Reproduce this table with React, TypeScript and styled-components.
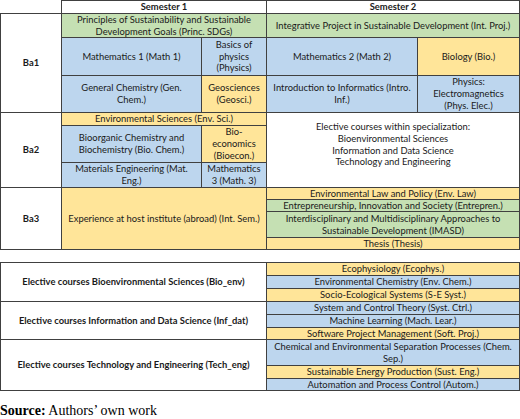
import React from "react";
import styled, { createGlobalStyle } from "styled-components";

const Global = createGlobalStyle`
  html, body { margin: 0; padding: 0; background: #fff; }
  body { font-family: Lato, "Open Sans", sans-serif; color: #000; }
`;

type Tone = "green" | "blue" | "yellow" | "white";
const toneColor: Record<Tone, string> = {
  green: "#c5e0b3",
  blue: "#bdd6ee",
  yellow: "#ffe599",
  white: "#ffffff",
};

const Page = styled.div`
  width: 520px;
  display: flex;
  flex-direction: column;
`;

const PlanGrid = styled.div`
  display: grid;
  grid-template-columns: 61px 140px 65px 151px 102px;
  grid-template-rows: 13px 24px 38px 37px 13px 37px 25px 12px 12px 26px 12px 1px;
`;

const ElectiveGrid = styled.div`
  margin-top: 12px;
  display: grid;
  grid-template-columns: 266px 253px;
  grid-template-rows: 13px 13px 13px 13px 13px 12px 26px 13px 12px 1px;
`;

const Cell = styled.div<{ $tone?: Tone; $col: string; $row: string; $bold?: boolean; $padBottom?: number }>`
  grid-column: ${(p) => p.$col};
  grid-row: ${(p) => p.$row};
  margin: 0 -1px -1px 0;
  border: 1px solid #404040;
  background: ${(p) => toneColor[p.$tone ?? "white"]};
  display: flex;
  align-items: center;
  justify-content: center;
  text-align: center;
  box-sizing: border-box;
  padding: 0 3px ${(p) => p.$padBottom ?? 0}px;
  font-size: 9.4px;
  line-height: 11.7px;
  color: #1a1a1a;
  font-weight: ${(p) => (p.$bold ? 700 : 400)};
  white-space: nowrap;
`;

const Source = styled.p`
  margin: 12px 0 0;
  font-family: "Liberation Serif", "Times New Roman", serif;
  font-size: 14px;
  line-height: 16px;
  color: #000;
`;

const Strong = styled.b`
  font-weight: 700;
`;

export default function App() {
  return (
    <Page>
      <Global />
      <PlanGrid>
        <Cell $col="2 / 4" $row="1 / 2" $bold>Semester 1</Cell>
        <Cell $col="4 / 6" $row="1 / 2" $bold>Semester 2</Cell>

        <Cell $col="1 / 2" $row="2 / 5" $bold>Ba1</Cell>
        <Cell $col="2 / 4" $row="2 / 3" $tone="green">
          Principles of Sustainability and Sustainable<br />Development Goals (Princ. SDGs)
        </Cell>
        <Cell $col="4 / 6" $row="2 / 3" $tone="green">
          Integrative Project in Sustainable Development (Int. Proj.)
        </Cell>
        <Cell $col="2 / 3" $row="3 / 4" $tone="blue">Mathematics 1 (Math 1)</Cell>
        <Cell $col="3 / 4" $row="3 / 4" $tone="blue">
          Basics of<br />physics<br />(Physics)
        </Cell>
        <Cell $col="4 / 5" $row="3 / 4" $tone="blue">Mathematics 2 (Math 2)</Cell>
        <Cell $col="5 / 6" $row="3 / 4" $tone="yellow">Biology (Bio.)</Cell>
        <Cell $col="2 / 3" $row="4 / 5" $tone="blue">
          General Chemistry (Gen.<br />Chem.)
        </Cell>
        <Cell $col="3 / 4" $row="4 / 5" $tone="yellow">
          Geosciences<br />(Geosci.)
        </Cell>
        <Cell $col="4 / 5" $row="4 / 5" $tone="blue">
          Introduction to Informatics (Intro.<br />Inf.)
        </Cell>
        <Cell $col="5 / 6" $row="4 / 5" $tone="blue">
          Physics:<br />Electromagnetics<br />(Phys. Elec.)
        </Cell>

        <Cell $col="1 / 2" $row="5 / 8" $bold>Ba2</Cell>
        <Cell $col="2 / 4" $row="5 / 6" $tone="yellow">Environmental Sciences (Env. Sci.)</Cell>
        <Cell $col="2 / 3" $row="6 / 7" $tone="blue">
          Bioorganic Chemistry and<br />Biochemistry (Bio. Chem.)
        </Cell>
        <Cell $col="3 / 4" $row="6 / 7" $tone="yellow">
          Bio-<br />economics<br />(Bioecon.)
        </Cell>
        <Cell $col="2 / 3" $row="7 / 8" $tone="blue">
          Materials Engineering (Mat.<br />Eng.)
        </Cell>
        <Cell $col="3 / 4" $row="7 / 8" $tone="blue">
          Mathematics<br />3 (Math. 3)
        </Cell>
        <Cell $col="4 / 6" $row="5 / 8" $padBottom={11}>
          Elective courses within specialization:<br />
          Bioenvironmental Sciences<br />
          Information and Data Science<br />
          Technology and Engineering
        </Cell>

        <Cell $col="1 / 2" $row="8 / 12" $bold>Ba3</Cell>
        <Cell $col="2 / 4" $row="8 / 12" $tone="yellow">
          Experience at host institute (abroad) (Int. Sem.)
        </Cell>
        <Cell $col="4 / 6" $row="8 / 9" $tone="yellow">Environmental Law and Policy (Env. Law)</Cell>
        <Cell $col="4 / 6" $row="9 / 10" $tone="green">
          Entrepreneurship, Innovation and Society (Entrepren.)
        </Cell>
        <Cell $col="4 / 6" $row="10 / 11" $tone="green">
          Interdisciplinary and Multidisciplinary Approaches to<br />Sustainable Development (IMASD)
        </Cell>
        <Cell $col="4 / 6" $row="11 / 12" $tone="yellow">Thesis (Thesis)</Cell>
      </PlanGrid>

      <ElectiveGrid>
        <Cell $col="1 / 2" $row="1 / 4" $bold>Elective courses Bioenvironmental Sciences (Bio_env)</Cell>
        <Cell $col="2 / 3" $row="1 / 2" $tone="yellow">Ecophysiology (Ecophys.)</Cell>
        <Cell $col="2 / 3" $row="2 / 3" $tone="blue">Environmental Chemistry (Env. Chem.)</Cell>
        <Cell $col="2 / 3" $row="3 / 4" $tone="yellow">Socio-Ecological Systems (S-E Syst.)</Cell>

        <Cell $col="1 / 2" $row="4 / 7" $bold>Elective courses Information and Data Science (Inf_dat)</Cell>
        <Cell $col="2 / 3" $row="4 / 5" $tone="blue">System and Control Theory (Syst. Ctrl.)</Cell>
        <Cell $col="2 / 3" $row="5 / 6" $tone="blue">Machine Learning (Mach. Lear.)</Cell>
        <Cell $col="2 / 3" $row="6 / 7" $tone="yellow">Software Project Management (Soft. Proj.)</Cell>

        <Cell $col="1 / 2" $row="7 / 10" $bold>Elective courses Technology and Engineering (Tech_eng)</Cell>
        <Cell $col="2 / 3" $row="7 / 8" $tone="blue">
          Chemical and Environmental Separation Processes (Chem.<br />Sep.)
        </Cell>
        <Cell $col="2 / 3" $row="8 / 9" $tone="yellow">Sustainable Energy Production (Sust. Eng.)</Cell>
        <Cell $col="2 / 3" $row="9 / 10" $tone="blue">Automation and Process Control (Autom.)</Cell>
      </ElectiveGrid>

      <Source>
        <Strong>Source:</Strong> Authors’ own work
      </Source>
    </Page>
  );
}
